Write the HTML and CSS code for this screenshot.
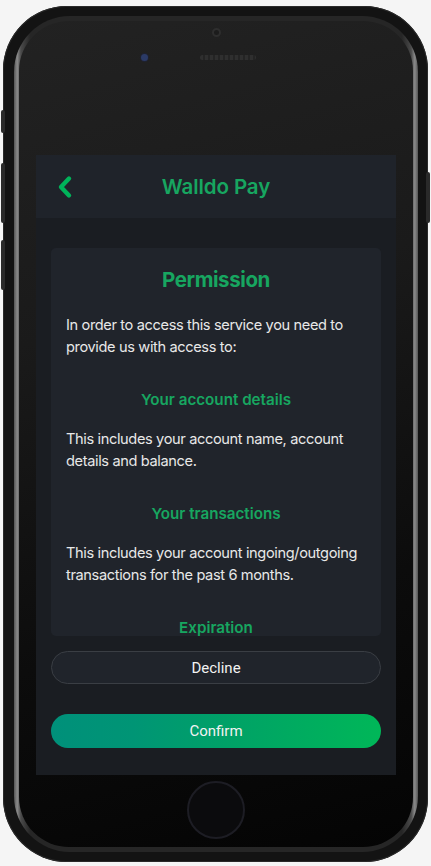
FILE: index.html
```html
<!DOCTYPE html>
<html lang="en">
<head>
<meta charset="utf-8">
<title>Walldo Pay - Permission</title>
<link rel="stylesheet" href="styles.css">
</head>
<body>
<div class="phone">
  <span class="side-btn mute"></span>
  <span class="side-btn vol-up"></span>
  <span class="side-btn vol-down"></span>
  <span class="side-btn power"></span>
  <div class="rim">
    <div class="face">
      <div class="top-bezel">
        <span class="camera"></span>
        <div class="sensor-row">
          <span class="sensor"></span>
          <span class="speaker"></span>
        </div>
      </div>
      <div class="screen">
        <header class="app-header">
          <button class="back" aria-label="Back">
            <svg width="18" height="24" viewBox="0 0 18 24"><polyline points="13,3.5 5,12 13,20.5" fill="none" stroke="#00b35a" stroke-width="4.4" stroke-linecap="round" stroke-linejoin="round"/></svg>
          </button>
          <h1 class="app-title">Walldo Pay</h1>
          <span></span>
        </header>
        <main class="content">
          <section class="card">
            <h2 class="card-title">Permission</h2>
            <p class="text">In order to access this service you need to provide us with access to:</p>
            <h3 class="item-title">Your account details</h3>
            <p class="text">This includes your account name, account details and balance.</p>
            <h3 class="item-title">Your transactions</h3>
            <p class="text">This includes your account ingoing/outgoing transactions for the past 6 months.</p>
            <h3 class="item-title">Expiration</h3>
          </section>
          <button class="btn btn-decline">Decline</button>
          <button class="btn btn-confirm">Confirm</button>
        </main>
      </div>
      <div class="home"></div>
    </div>
  </div>
</div>
</body>
</html>
```

FILE: styles.css
```css
* { box-sizing: border-box; }

html, body {
  margin: 0;
  background: #f5f5f5;
}

body {
  padding: 6px 3px 0 3px;
  font-family: Inter, "Noto Sans", sans-serif;
}

.phone {
  position: relative;
  width: 425px;
  height: 856px;
  border-radius: 64px;
  background: #131313;
  padding: 10px 10px 10px 11px;
  box-shadow: inset 0 0 0 1px #2a2a2a;
}

.side-btn {
  position: absolute;
  width: 4px;
  background: #2a2a2a;
  border-radius: 2px;
}
.mute { left: -2px; top: 104px; height: 23px; }
.vol-up { left: -2px; top: 157px; height: 60px; }
.vol-down { left: -2px; top: 234px; height: 50px; }
.power { right: -2px; top: 166px; height: 51px; }

.rim {
  height: 100%;
  border-radius: 56px;
  padding: 5px;
  background: linear-gradient(90deg, #555 0, #8a8a8a 0.8%, #4a4a4a 1.7%, #262626 4%, #262626 96%, #4a4a4a 98.3%, #8a8a8a 99.2%, #555 100%);
}

.face {
  height: 100%;
  border-radius: 50px;
  background: linear-gradient(165deg, #222222 0%, #1a1a1a 35%, #0c0c0c 70%, #040404 100%);
  display: flex;
  flex-direction: column;
  align-items: center;
}

.top-bezel {
  height: 134px;
  width: 100%;
  display: flex;
  flex-direction: column;
  align-items: center;
  padding-top: 7px;
}

.camera {
  width: 9px;
  height: 9px;
  border-radius: 50%;
  background: #1c1c1c;
  border: 2px solid #2e2e2e;
}

.sensor-row {
  display: flex;
  align-items: center;
  gap: 52px;
  margin-top: 17px;
  margin-left: -36px;
}

.sensor {
  width: 7px;
  height: 7px;
  border-radius: 50%;
  background: #2b3a66;
  box-shadow: 0 0 0 1px #1f2230;
}

.speaker {
  width: 56px;
  height: 5px;
  border-radius: 3px;
  background: repeating-linear-gradient(90deg, #2f2f2f 0 3px, #242424 3px 5px);
}

.screen {
  width: 360px;
  height: 620px;
  background: #1a1d22;
  display: flex;
  flex-direction: column;
}

.app-header {
  height: 63px;
  flex: none;
  background: #1f232a;
  display: grid;
  grid-template-columns: 1fr auto 1fr;
  align-items: center;
}

.back {
  justify-self: start;
  margin-left: 20px;
  padding: 0;
  border: 0;
  background: none;
  display: flex;
}

.app-title {
  margin: 0;
  font-size: 20.5px;
  font-weight: 600;
  color: #17a660;
  letter-spacing: -0.1px;
}

.content {
  flex: 1;
  padding: 30px 15px 0;
  display: flex;
  flex-direction: column;
}

.card {
  height: 388px;
  flex: none;
  overflow: hidden;
  background: #20242b;
  border-radius: 5px;
  padding: 18px 15px;
}

.card-title {
  margin: 0 0 20px;
  text-align: center;
  font-size: 20.5px;
  line-height: 28px;
  font-weight: 700;
  color: #17a660;
  letter-spacing: -0.4px;
}

.text {
  margin: 0;
  font-size: 14.6px;
  line-height: 22px;
  color: #e8e8e8;
  letter-spacing: -0.37px;
}

.item-title {
  margin: 31px 0 17px;
  text-align: center;
  font-size: 15.2px;
  line-height: 22px;
  font-weight: 600;
  color: #17a660;
}

.btn {
  flex: none;
  width: 100%;
  border-radius: 17px;
  font-family: Roboto, "Noto Sans", sans-serif;
  font-size: 15px;
  line-height: 20px;
  color: #f2f2f2;
  padding: 0;
}

.btn-decline {
  margin-top: 15px;
  height: 33px;
  background: #20242b;
  border: 1px solid #3a3e44;
}

.btn-confirm {
  margin-top: 30px;
  height: 34px;
  border: 0;
  background: linear-gradient(90deg, #00907a 0%, #009575 25%, #00a266 55%, #00b758 100%);
}

.home {
  margin-top: 6px;
  width: 58px;
  height: 58px;
  border-radius: 50%;
  background: #0b0b0d;
  border: 2px solid #1d1d24;
}
```
